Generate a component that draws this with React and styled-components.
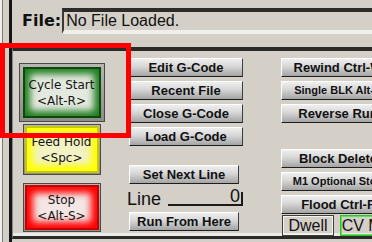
import React from 'react';
import styled, { createGlobalStyle, css } from 'styled-components';

const GlobalStyle = createGlobalStyle`
    html, body {
        margin: 0;
        padding: 0;
        background: #d4d0c8;
    }
`;

const Screen = styled.div`
    position: relative;
    display: flex;
    width: 372px;
    height: 242px;
    overflow: hidden;
    background: #d4d0c8;
    font-family: "Liberation Sans", Arial, sans-serif;
    color: #111;
`;

const LeftEdge = styled.div`
    flex: none;
    width: 12px;
    background: linear-gradient(to right,
        #eeeeec 0 2px, #7c7a76 2px 3px, #d4d0c8 3px 9px, #161616 9px 12px);
`;

const Main = styled.div`
    flex: 1;
    min-width: 0;
    display: flex;
    flex-direction: column;
`;

const Header = styled.div`
    flex: none;
    height: 39px;
    padding: 8px 0 0 10px;
    display: flex;
    align-items: flex-start;
`;

const FileLabel = styled.span`
    font-family: "DejaVu Sans", Verdana, sans-serif;
    font-weight: bold;
    font-size: 16px;
    line-height: 26px;
    margin-right: 1px;
    white-space: nowrap;
`;

const FileField = styled.div`
    flex: 1;
    box-sizing: border-box;
    height: 26px;
    border-top: 4px solid #2e2c2a;
    border-left: 2px solid #3a3936;
    border-bottom: 4px solid #efeeea;
    padding-left: 2px;
    font-size: 16px;
    line-height: 18px;
    white-space: nowrap;
`;

const Panel = styled.div`
    flex: none;
    height: 192px;
    box-sizing: border-box;
    border-top: 4px solid #2b2a28;
    border-bottom: 3px solid #2b2a28;
    border-left: 1px solid #8a8884;
    box-shadow: inset 0 -3px 0 #ebeae6;
    padding-left: 5px;
    display: flex;
`;

const LeftCol = styled.div`
    flex: none;
    width: 87px;
    padding-top: 12px;
    display: flex;
    flex-direction: column;
    align-items: center;
`;

const tones = {
    green: css`
        border-color: #0c4a0c;
        background: #e4e9df;
        box-shadow: inset 0 0 7px 5px #1f7d1f;
    `,
    yellow: css`
        border-color: #c8c800;
        background: #f2f2c4;
        box-shadow: inset 0 0 7px 6px #ffff00;
    `,
    red: css`
        border-color: #c40000;
        background: #f3e6e4;
        box-shadow: inset 0 0 7px 6px #ff0000;
    `,
};

const BigFrame = styled.div`
    box-sizing: border-box;
    display: flex;
    width: ${({ $large }) => ($large ? 86 : 78)}px;
    height: ${({ $h }) => $h}px;
    margin-top: ${({ $mt }) => $mt || 0}px;
    padding: ${({ $large }) => ($large ? 3 : 1)}px;
    border: 1px solid #4a4a48;
    background: linear-gradient(to bottom, #b8b6b2, #8e8c88);
`;

const BigButton = styled.div`
    flex: 1;
    border: 2px solid;
    display: flex;
    flex-direction: column;
    align-items: center;
    justify-content: center;
    font-family: "DejaVu Sans", Verdana, sans-serif;
    font-size: 12px;
    line-height: 16px;
    color: #141414;
    ${({ $tone }) => tones[$tone]}
`;

const Column = styled.div`
    flex: none;
    width: 114px;
    margin-left: ${({ $ml }) => $ml}px;
    padding-top: 7px;
    display: flex;
    flex-direction: column;
    gap: 4px;
`;

const GrayButton = styled.div`
    box-sizing: border-box;
    flex: none;
    width: ${({ $narrow }) => ($narrow ? 110 : 114)}px;
    height: 19px;
    margin-top: ${({ $mt }) => $mt || 0}px;
    border: 1px solid;
    border-color: #ffffff #3c3c3c #1e1e1e #ffffff;
    background: linear-gradient(to bottom, #efefef 0%, #d6d6d6 45%, #a4a4a4 100%);
    display: flex;
    align-items: center;
    justify-content: center;
    font-weight: bold;
    font-size: ${({ $small }) => ($small ? 11 : 13)}px;
    line-height: 15px;
    white-space: nowrap;
    color: #111;
`;

const LineRow = styled.div`
    display: flex;
    align-items: flex-end;
    height: 20px;
    margin-left: -2px;
`;

const LineLabel = styled.span`
    font-size: 18px;
    line-height: 18px;
`;

const LineField = styled.div`
    flex: 1;
    margin-left: 7px;
    height: 12px;
    margin-bottom: 2px;
    border-bottom: 2px solid #1a1a1a;
    border-right: 2px solid #1a1a1a;
    display: flex;
    align-items: flex-end;
    justify-content: flex-end;
    font-size: 18px;
    line-height: 16px;
    padding-right: 1px;
`;

const ModeRow = styled.div`
    display: flex;
    gap: 6px;
    margin-top: -3px;
    padding-left: 1px;
`;

const ModeBox = styled.div`
    box-sizing: border-box;
    flex: none;
    width: ${({ $w }) => $w}px;
    height: 21px;
    border: 1px solid ${({ $on }) => ($on ? '#2fbf2f' : '#3e3e3c')};
    box-shadow: inset 0 0 0 1px ${({ $on }) => ($on ? '#5ee05e' : '#f4f3f0')};
    display: flex;
    align-items: center;
    justify-content: center;
    font-size: 16px;
    white-space: nowrap;
    overflow: hidden;
`;

const Highlight = styled.div`
    position: absolute;
    left: 0;
    top: 43px;
    width: 131px;
    height: 95px;
    box-sizing: border-box;
    border: 5px solid #ff0000;
    pointer-events: none;
`;

export default function App() {
    return (
        <>
            <GlobalStyle />
            <Screen>
                <LeftEdge />
                <Main>
                    <Header>
                        <FileLabel>File:</FileLabel>
                        <FileField>No File Loaded.</FileField>
                    </Header>
                    <Panel>
                        <LeftCol>
                            <BigFrame $large $h={59}>
                                <BigButton $tone="green">
                                    <span>Cycle Start</span>
                                    <span>&lt;Alt-R&gt;</span>
                                </BigButton>
                            </BigFrame>
                            <BigFrame $h={51} $mt={2}>
                                <BigButton $tone="yellow">
                                    <span>Feed Hold</span>
                                    <span>&lt;Spc&gt;</span>
                                </BigButton>
                            </BigFrame>
                            <BigFrame $h={49} $mt={8}>
                                <BigButton $tone="red">
                                    <span>Stop</span>
                                    <span>&lt;Alt-S&gt;</span>
                                </BigButton>
                            </BigFrame>
                        </LeftCol>
                        <Column $ml={24}>
                            <GrayButton>Edit G-Code</GrayButton>
                            <GrayButton>Recent File</GrayButton>
                            <GrayButton>Close G-Code</GrayButton>
                            <GrayButton>Load G-Code</GrayButton>
                            <GrayButton $narrow $mt={15}>Set Next Line</GrayButton>
                            <LineRow>
                                <LineLabel>Line</LineLabel>
                                <LineField>0</LineField>
                            </LineRow>
                            <GrayButton $narrow>Run From Here</GrayButton>
                        </Column>
                        <Column $ml={38}>
                            <GrayButton>Rewind Ctrl-W</GrayButton>
                            <GrayButton $small>Single BLK Alt-N</GrayButton>
                            <GrayButton>Reverse Run</GrayButton>
                            <GrayButton $mt={22}>Block Delete</GrayButton>
                            <GrayButton $small>M1 Optional Stop</GrayButton>
                            <GrayButton>Flood Ctrl-F</GrayButton>
                            <ModeRow>
                                <ModeBox $w={52}>Dwell</ModeBox>
                                <ModeBox $w={70} $on>CV Mode</ModeBox>
                            </ModeRow>
                        </Column>
                    </Panel>
                </Main>
                <Highlight />
            </Screen>
        </>
    );
}
